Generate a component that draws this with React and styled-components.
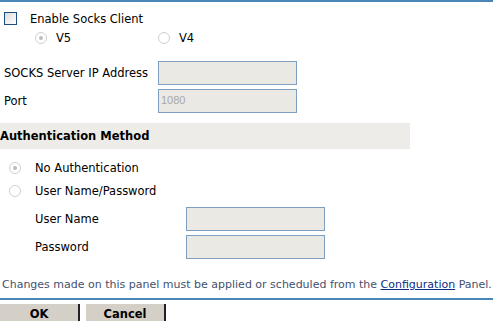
import React from 'react';
import styled, { createGlobalStyle } from 'styled-components';

const Global = createGlobalStyle`
  html, body { margin: 0; padding: 0; background: #fff; }
  body { font-family: "DejaVu Sans", Verdana, sans-serif; font-size: 11.5px; color: #000; }
`;

const Page = styled.div`
  width: 493px;
  height: 321px;
  border-top: 2px solid #4a86b8;
  box-sizing: border-box;
  overflow: hidden;
`;

const CheckRow = styled.label`
  display: flex;
  align-items: center;
  height: 13px;
  margin: 10px 0 0 4px;
  gap: 13px;
`;

const Box = styled.span`
  width: 11px;
  height: 11px;
  border: 1px solid #1c4f80;
  background: linear-gradient(135deg, #dcdcdc, #ffffff);
`;

const RadioLine = styled.div`
  display: flex;
  align-items: center;
  height: 14px;
  margin-top: ${p => p.$top || 0}px;
  padding-left: ${p => p.$indent || 0}px;
`;

const RadioItem = styled.label`
  display: flex;
  align-items: center;
  gap: ${p => p.$gap || 9}px;
  width: ${p => p.$w ? p.$w + 'px' : 'auto'};
`;

const Radio = styled.span`
  width: 10px;
  height: 10px;
  border-radius: 50%;
  border: 1px solid #cfcfcf;
  background: #fff;
  display: flex;
  align-items: center;
  justify-content: center;
  &::after {
    content: '';
    width: 4px;
    height: 4px;
    border-radius: 50%;
    background: ${p => (p.$on ? '#bdbdbd' : 'transparent')};
  }
`;

const FieldGrid = styled.div`
  display: grid;
  grid-template-columns: ${p => p.$label}px 139px;
  row-gap: 4px;
  padding-left: ${p => p.$indent}px;
  margin-top: ${p => p.$top}px;
  align-items: center;
`;

const Label = styled.span`
  line-height: 24px;
`;

const Input = styled.div`
  box-sizing: border-box;
  height: 24px;
  border: 1px solid #7f9fc2;
  background: #ebe9e3;
  color: #a8a8a8;
  padding: 4px 0 0 2px;
  font-family: "Liberation Sans", Arial, sans-serif;
  font-size: 11px;
`;

const SectionHead = styled.div`
  width: 410px;
  height: 26px;
  margin-top: 10px;
  background: #eeece8;
  font-weight: bold;
  display: flex;
  align-items: center;
`;

const Note = styled.p`
  margin: 19px 0 0 2px;
  font-size: 11px;
  color: #43516e;
  white-space: nowrap;
  a { color: #0c2d83; text-decoration: underline; }
`;

const Rule = styled.div`
  height: 2px;
  background: #4a86b8;
  margin-top: 7px;
`;

const Buttons = styled.div`
  display: flex;
  gap: 6px;
  margin-top: 4px;
`;

const Button = styled.button`
  width: 80px;
  height: 20px;
  padding: 0;
  border: none;
  border-right: 2px solid #222;
  border-bottom: 1px solid #222;
  background: #d4d0c8;
  font-family: "DejaVu Sans", Verdana, sans-serif;
  font-size: 11.5px;
  font-weight: bold;
  color: #000;
`;

export default function App() {
  return (
    <Page>
      <Global />
      <CheckRow><Box /><span>Enable Socks Client</span></CheckRow>
      <RadioLine $top={6} $indent={35}>
        <RadioItem $w={123}><Radio $on />V5</RadioItem>
        <RadioItem><Radio />V4</RadioItem>
      </RadioLine>
      <FieldGrid $label={154} $indent={4} $top={16}>
        <Label>SOCKS Server IP Address</Label><Input />
        <Label>Port</Label><Input>1080</Input>
      </FieldGrid>
      <SectionHead>Authentication Method</SectionHead>
      <RadioLine $top={12} $indent={9}>
        <RadioItem $gap={14}><Radio $on />No Authentication</RadioItem>
      </RadioLine>
      <RadioLine $top={9} $indent={9}>
        <RadioItem $gap={14}><Radio />User Name/Password</RadioItem>
      </RadioLine>
      <FieldGrid $label={151} $indent={35} $top={9}>
        <Label>User Name</Label><Input />
        <Label>Password</Label><Input />
      </FieldGrid>
      <Note>Changes made on this panel must be applied or scheduled from the <a href="#">Configuration</a> Panel.</Note>
      <Rule />
      <Buttons>
        <Button>OK</Button>
        <Button>Cancel</Button>
      </Buttons>
    </Page>
  );
}
